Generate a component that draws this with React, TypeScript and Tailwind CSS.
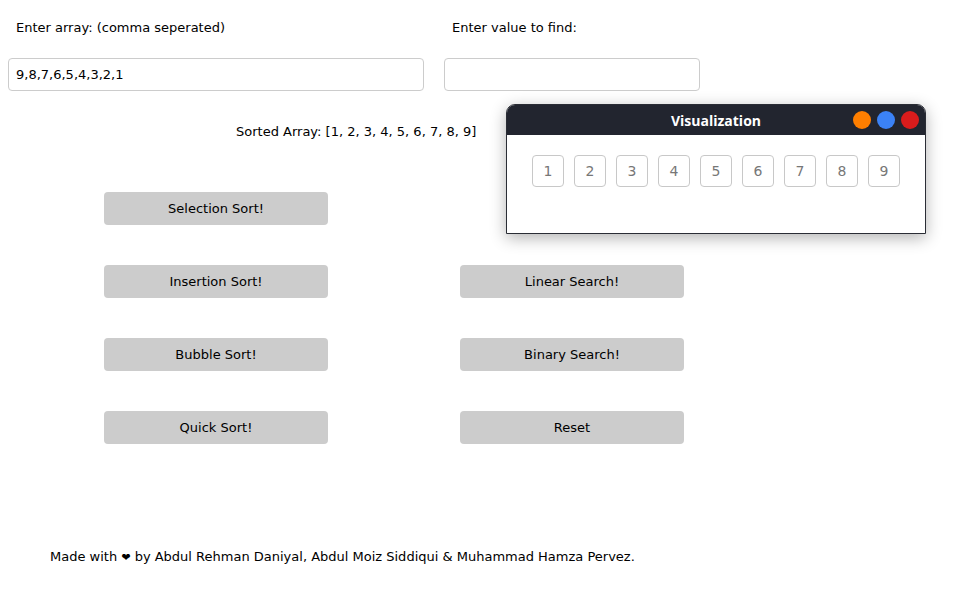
import React from "react";

export default function App() {
  const nums = [1, 2, 3, 4, 5, 6, 7, 8, 9];
  const left = ["Selection Sort!", "Insertion Sort!", "Bubble Sort!", "Quick Sort!"];
  const right = ["", "Linear Search!", "Binary Search!", "Reset"];
  return (
    <div className="relative w-[964px] h-[602px] bg-white text-[13px] text-black overflow-hidden" style={{ fontFamily: '"DejaVu Sans", sans-serif' }}>
      <div className="flex gap-[20px] pl-[8px] pt-[18px]">
        <div className="flex flex-col w-[416px]">
          <div className="pl-[8px] h-[20px] leading-[20px]">Enter array: (comma seperated)</div>
          <input
            className="mt-[20px] h-[33px] w-[416px] border border-[#cccccc] rounded-[4px] px-[7px] outline-none text-[13px]"
            style={{ fontFamily: '"DejaVu Sans", sans-serif' }}
            defaultValue="9,8,7,6,5,4,3,2,1"
          />
        </div>
        <div className="flex flex-col w-[256px]">
          <div className="pl-[8px] h-[20px] leading-[20px]">Enter value to find:</div>
          <input className="mt-[20px] h-[33px] w-[256px] border border-[#cccccc] rounded-[4px] px-[7px] outline-none" />
        </div>
      </div>
      <div className="pl-[236px] mt-[31px] h-[20px] leading-[20px]">Sorted Array: [1, 2, 3, 4, 5, 6, 7, 8, 9]</div>
      <div className="grid grid-cols-[224px_224px] gap-x-[132px] gap-y-[40px] pl-[104px] mt-[50px]">
        {left.map((l, i) => (
          <React.Fragment key={i}>
            <div className="h-[33px] rounded-[4px] bg-[#cccccc] flex items-center justify-center">{l}</div>
            {right[i] ? (
              <div className="h-[33px] rounded-[4px] bg-[#cccccc] flex items-center justify-center">{right[i]}</div>
            ) : (
              <div />
            )}
          </React.Fragment>
        ))}
      </div>
      <div className="pl-[50px] mt-[103px] h-[20px] leading-[20px]">
        Made with <span className="text-[11px]">❤</span> by Abdul Rehman Daniyal, Abdul Moiz Siddiqui &amp; Muhammad Hamza Pervez.
      </div>

      <div className="absolute left-[506px] top-[104px] w-[420px] h-[130px] rounded-t-[9px] bg-white border border-[#2a2d35] shadow-[0_4px_16px_rgba(0,0,0,0.3)] overflow-hidden flex flex-col">
        <div className="relative h-[30px] bg-[#22252f] flex items-center justify-center shrink-0">
          <span className="text-white font-bold text-[14px]" style={{ fontFamily: '"Open Sans", sans-serif' }}>Visualization</span>
          <div className="absolute right-[6px] top-[6px] flex gap-[6px]">
            <span className="w-[18px] h-[18px] rounded-full bg-[#ff7f00]" />
            <span className="w-[18px] h-[18px] rounded-full bg-[#3b82f6]" />
            <span className="w-[18px] h-[18px] rounded-full bg-[#d91c1c]" />
          </div>
        </div>
        <div className="flex gap-[10px] pl-[25px] pt-[20px]">
          {nums.map((n) => (
            <div key={n} className="w-[32px] h-[32px] border border-[#c8c8c8] rounded-[4px] flex items-center justify-center text-[#777777] text-[14px]">
              {n}
            </div>
          ))}
        </div>
      </div>
    </div>
  );
}
